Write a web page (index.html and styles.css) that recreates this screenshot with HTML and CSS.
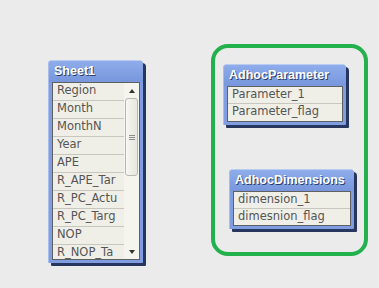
FILE: index.html
```html
<!DOCTYPE html>
<html>

<head>
	<meta charset="UTF-8">
	<title>Table viewer</title>
	<link rel="stylesheet" href="styles.css">
</head>

<body>
	<div class="canvas">

		<div class="tbl sheet">
			<div class="tbl-title">Sheet1</div>
			<div class="tbl-body">
				<div class="fields">
					<div class="field">Region</div>
					<div class="field">Month</div>
					<div class="field">MonthN</div>
					<div class="field">Year</div>
					<div class="field">APE</div>
					<div class="field">R_APE_Tar</div>
					<div class="field">R_PC_Actu</div>
					<div class="field">R_PC_Targ</div>
					<div class="field">NOP</div>
					<div class="field">R_NOP_Ta</div>
				</div>
				<div class="scroll">
					<div class="arrow up"></div>
					<div class="thumb"><span class="grip"></span></div>
					<div class="track"></div>
					<div class="arrow down"></div>
				</div>
			</div>
		</div>

		<div class="marker"></div>

		<div class="tbl param">
			<div class="tbl-title">AdhocParameter</div>
			<div class="tbl-body">
				<div class="fields">
					<div class="field">Parameter_1</div>
					<div class="field">Parameter_flag</div>
				</div>
			</div>
		</div>

		<div class="tbl dims">
			<div class="tbl-title">AdhocDimensions</div>
			<div class="tbl-body">
				<div class="fields">
					<div class="field">dimension_1</div>
					<div class="field">dimesnion_flag</div>
				</div>
			</div>
		</div>

	</div>
</body>

</html>
```

FILE: styles.css
```css
html,
body {
	margin: 0;
	padding: 0;
	height: 100%;
	background: #ebebeb;
}

body {
	font-family: "DejaVu Sans", "Liberation Sans", sans-serif;
}

.canvas {
	position: relative;
	width: 379px;
	height: 288px;
	overflow: hidden;
}

/* table boxes */

.tbl {
	position: absolute;
	display: flex;
	flex-direction: column;
	box-sizing: border-box;
	padding: 0 3px 3px 3px;
	background: #7f9de0;
	border-top: 1px solid #b9cbf1;
	border-left: 1px solid #a8bdec;
	border-radius: 4px 4px 1px 1px;
	box-shadow: 3px 3px 0 #26365e;
}

.tbl-title {
	height: 21px;
	padding-left: 5px;
	line-height: 21px;
	font-family: "Liberation Sans", Arial, sans-serif;
	font-size: 12.5px;
	font-weight: 700;
	color: #fff;
	text-shadow: 1px 1px 0 #2c3d68;
	background: linear-gradient(#8fadeb, #7796dc);
	margin: 0 -3px;
	border-radius: 3px 3px 0 0;
}

.tbl-body {
	flex: 1;
	display: flex;
	border: 1px solid #5f6062;
	background: #f0efe7;
	overflow: hidden;
}

.fields {
	flex: 1;
}

.field {
	box-sizing: border-box;
	height: 17px;
	line-height: 15px;
	padding-left: 4px;
	border-bottom: 1px solid #c8c7bf;
	font-size: 11.5px;
	color: #555;
	white-space: nowrap;
}

.field:last-child {
	border-bottom: none;
}

/* tables on the canvas */

.sheet {
	left: 48px;
	top: 60px;
	width: 95px;
	height: 203px;
}

.sheet .field {
	height: 18px;
	line-height: 14px;
}

.param {
	left: 223px;
	top: 64px;
	width: 123px;
	height: 61px;
}

.dims {
	left: 229px;
	top: 169px;
	width: 125px;
	height: 60px;
}

/* scrollbar */

.scroll {
	width: 15px;
	display: flex;
	flex-direction: column;
	align-items: center;
	background: #f5f4ef;
}

.arrow {
	width: 0;
	height: 0;
	border-left: 3px solid transparent;
	border-right: 3px solid transparent;
	margin: 6px 0 5px;
}

.arrow.up {
	border-bottom: 4px solid #333;
}

.arrow.down {
	border-top: 4px solid #333;
}

.thumb {
	width: 13px;
	height: 78px;
	box-sizing: border-box;
	border: 1px solid #b8b8b2;
	border-radius: 3px;
	background: linear-gradient(90deg, #f7f7f4, #e6e5de);
	display: flex;
	align-items: center;
	justify-content: center;
}

.grip {
	width: 6px;
	height: 5px;
	border-top: 1px solid #8c8c88;
	border-bottom: 1px solid #8c8c88;
	box-sizing: border-box;
	background: linear-gradient(transparent 1px, #8c8c88 1px, #8c8c88 2px, transparent 2px);
}

.track {
	flex: 1;
}

/* green highlight */

.marker {
	position: absolute;
	left: 211px;
	top: 44px;
	width: 157px;
	height: 212px;
	box-sizing: border-box;
	border: 4px solid #22b14c;
	border-radius: 17px;
}
```
